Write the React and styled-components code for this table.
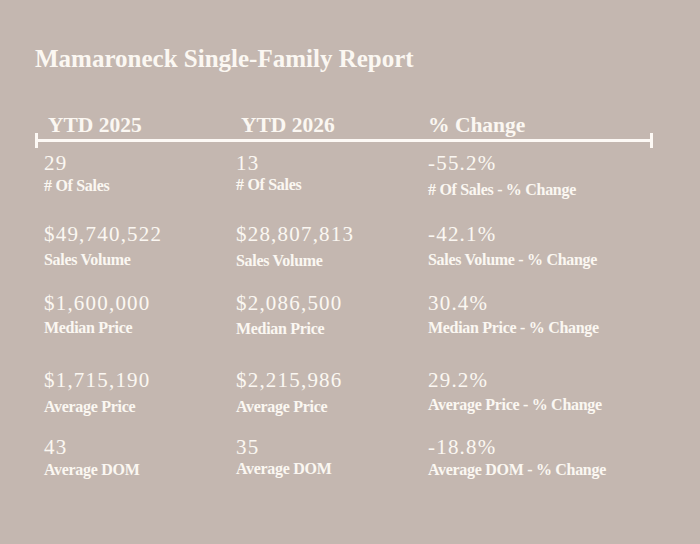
import React from 'react';
import styled, { createGlobalStyle } from 'styled-components';

const GlobalStyle = createGlobalStyle`
  html, body {
    margin: 0;
    padding: 0;
    background: #c4b7b0;
  }
  body {
    font-family: "Liberation Serif", "Times New Roman", serif;
    color: #fbf7f2;
  }
`;

const Page = styled.div`
  width: 700px;
  height: 544px;
  box-sizing: border-box;
  padding: 44px 0 0 35px;
  background: #c4b7b0;
`;

const Title = styled.h1`
  margin: 0;
  font-size: 25px;
  line-height: 30px;
  font-weight: 700;
  color: #fbf7f2;
`;

const Columns = styled.div`
  display: grid;
  grid-template-columns: 192px 192px 192px;
  padding-left: 9px;
`;

const HeaderRow = styled(Columns)`
  margin-top: 39px;
`;

const Header = styled.div`
  font-size: 21.5px;
  line-height: 24px;
  font-weight: 700;
  padding-left: ${p => p.$offset}px;
`;

const Rule = styled.div`
  position: relative;
  width: 618px;
  height: 3px;
  margin-top: 2px;
  background: #fdf9f5;

  &::before,
  &::after {
    content: '';
    position: absolute;
    top: -6px;
    width: 3px;
    height: 15px;
    background: #fdf9f5;
  }
  &::before { left: 0; }
  &::after { right: 0; }
`;

const StatRow = styled(Columns)`
  margin-top: ${p => p.$top}px;
`;

const Cell = styled.div`
  display: flex;
  flex-direction: column;
`;

const Value = styled.div`
  font-family: "Liberation Serif", "Times New Roman", serif;
  font-size: 21px;
  line-height: 22px;
  letter-spacing: 1.2px;
  font-weight: 400;
`;

const Label = styled.div`
  margin-top: ${p => p.$gap}px;
  transform: translateY(${p => p.$shift}px);
  font-size: 16px;
  line-height: 18px;
  font-weight: 700;
  letter-spacing: -0.3px;
`;

const stats = [
  { top: 10, gap: 3, label: '# Of Sales', values: ['29', '13', '-55.2%'], shift: [0, -1, 4] },
  { top: 28, gap: 6, label: 'Sales Volume', values: ['$49,740,522', '$28,807,813', '-42.1%'], shift: [0, 1, 0] },
  { top: 23, gap: 5, label: 'Median Price', values: ['$1,600,000', '$2,086,500', '30.4%'], shift: [0, 1, 0] },
  { top: 32, gap: 7, label: 'Average Price', values: ['$1,715,190', '$2,215,986', '29.2%'], shift: [0, 0, -2] },
  { top: 20, gap: 3, label: 'Average DOM', values: ['43', '35', '-18.8%'], shift: [0, -1, 0] },
];

const App = () => (
  <Page>
    <GlobalStyle />
    <Title>Mamaroneck Single-Family Report</Title>

    <HeaderRow>
      <Header $offset={4}>YTD 2025</Header>
      <Header $offset={5}>YTD 2026</Header>
      <Header $offset={-1}>% Change</Header>
    </HeaderRow>
    <Rule />

    {stats.map(row => (
      <StatRow key={row.label} $top={row.top}>
        {row.values.map((v, i) => (
          <Cell key={i}>
            <Value>{v}</Value>
            <Label $gap={row.gap} $shift={row.shift[i]}>
              {i === 2 ? `${row.label} - % Change` : row.label}
            </Label>
          </Cell>
        ))}
      </StatRow>
    ))}
  </Page>
);

export default App;
